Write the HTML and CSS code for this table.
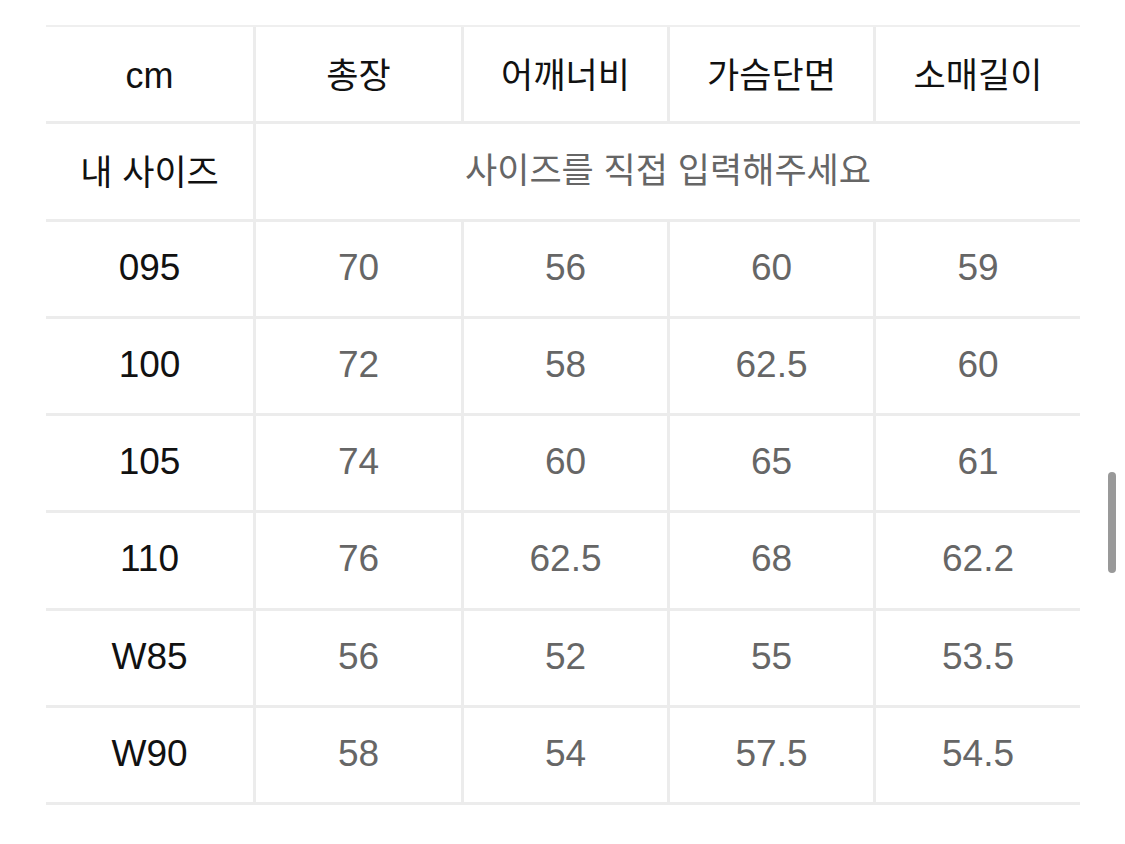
FILE: index.html
```html
<!DOCTYPE html>
<html lang="ko">
<head>
<meta charset="utf-8">
<link rel="stylesheet" href="styles.css">
</head>
<body>
<div class="page">
  <div class="size-table">
    <div class="cell head first">cm</div>
    <div class="cell head ko">총장</div>
    <div class="cell head ko">어깨너비</div>
    <div class="cell head ko">가슴단면</div>
    <div class="cell head ko">소매길이</div>

    <div class="cell head first ko">내 사이즈</div>
    <div class="cell hint span4">사이즈를 직접 입력해주세요</div>

    <div class="cell label first">095</div>
    <div class="cell val">70</div><div class="cell val">56</div><div class="cell val">60</div><div class="cell val">59</div>

    <div class="cell label first">100</div>
    <div class="cell val">72</div><div class="cell val">58</div><div class="cell val">62.5</div><div class="cell val">60</div>

    <div class="cell label first">105</div>
    <div class="cell val">74</div><div class="cell val">60</div><div class="cell val">65</div><div class="cell val">61</div>

    <div class="cell label first">110</div>
    <div class="cell val">76</div><div class="cell val">62.5</div><div class="cell val">68</div><div class="cell val">62.2</div>

    <div class="cell label first">W85</div>
    <div class="cell val">56</div><div class="cell val">52</div><div class="cell val">55</div><div class="cell val">53.5</div>

    <div class="cell label first">W90</div>
    <div class="cell val">58</div><div class="cell val">54</div><div class="cell val">57.5</div><div class="cell val">54.5</div>
  </div>
  <div class="scrollbar"></div>
</div>
</body>
</html>
```

FILE: styles.css
```css
html, body {
  margin: 0;
  padding: 0;
  background: #ffffff;
}
body {
  font-family: "Liberation Sans", "Noto Sans CJK KR", sans-serif;
}
.page {
  position: relative;
  width: 1125px;
  height: 844px;
  padding: 25px 0 0 46px;
  box-sizing: border-box;
}
.size-table {
  width: 1034px;
  display: grid;
  grid-template-columns: 207px 208px 206px 206px 207px;
  grid-auto-rows: 97.25px;
  border-top: 2px solid #efefef;
}
.cell {
  display: flex;
  align-items: center;
  justify-content: center;
  border-bottom: 3px solid #ececec;
  border-left: 3px solid #ececec;
  box-sizing: border-box;
  font-size: 37px;
  color: #666666;
}
.cell.first {
  border-left: none;
  color: #111111;
}
.head {
  color: #111111;
  font-size: 36px;
  padding-top: 3px;
}
.head.ko {
  font-family: "Noto Sans CJK KR", "Liberation Sans", sans-serif;
  font-size: 35px;
  font-weight: 400;
  padding-top: 0;
  padding-bottom: 4px;
}
.hint {
  grid-column: span 4;
  font-family: "Noto Sans CJK KR", "Liberation Sans", sans-serif;
  font-size: 35px;
  color: #666666;
  padding-bottom: 8px;
}
.label {
  color: #111111;
}
.val, .label {
  padding-bottom: 2px;
}
.scrollbar {
  position: absolute;
  left: 1108px;
  top: 472px;
  width: 8px;
  height: 101px;
  border-radius: 4px;
  background: #999999;
}
```
